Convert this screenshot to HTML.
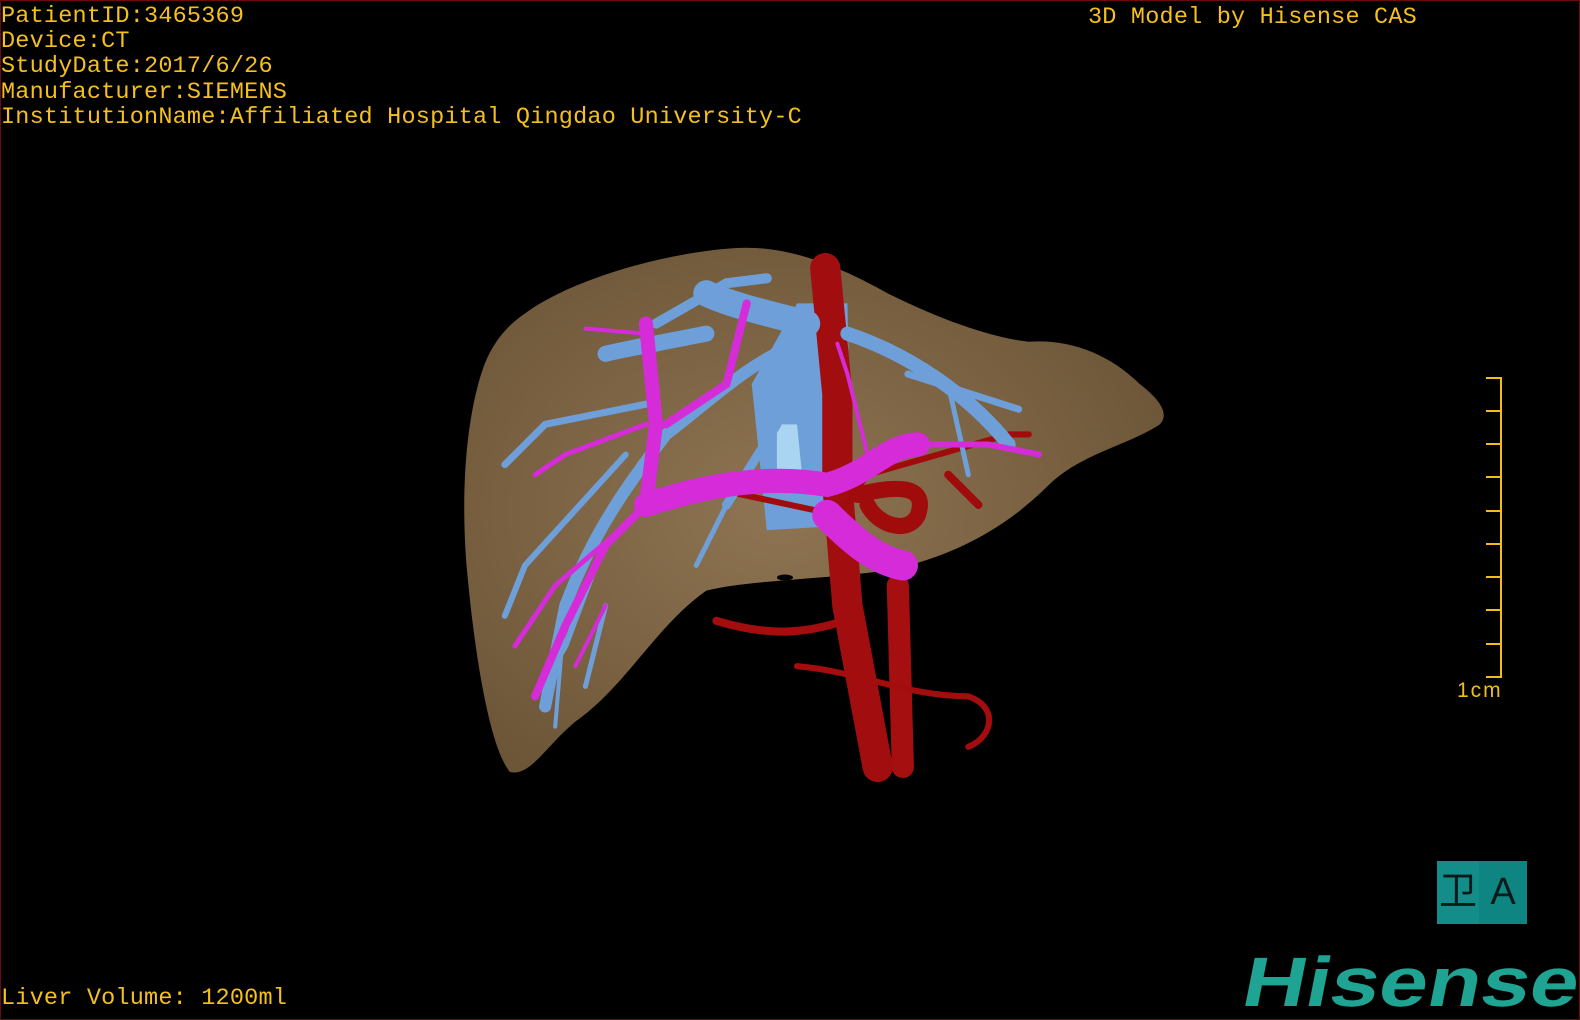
<!DOCTYPE html>
<html><head><meta charset="utf-8"><style>
html,body{margin:0;padding:0;background:#000;}
#w{position:relative;width:1580px;height:1020px;background:#000;overflow:hidden;box-sizing:border-box;border:1px solid #6a0c0c;}
.t{position:absolute;font-family:"Liberation Mono",monospace;font-size:23.5px;letter-spacing:0.2px;color:#f5c01e;white-space:pre;line-height:25.2px;}
#ruler{position:absolute;left:1499px;top:376px;width:2px;height:300px;background:#f2bd1c;}
.tk{position:absolute;left:1485px;width:16px;height:2px;background:#f2bd1c;}
#box{position:absolute;left:1436px;top:860px;width:90px;height:63px;background:#128d8a;}
#box div{position:absolute;top:0;height:63px;font-family:"Liberation Sans","Noto Sans CJK SC",sans-serif;color:#0a1a1a;font-size:38px;line-height:63px;text-align:center;}
#logo{position:absolute;left:1250px;top:946px;font-family:"Liberation Sans",sans-serif;font-weight:bold;font-size:70px;color:#1fa392;line-height:1;transform-origin:0 0;transform:scaleX(1.25) skewX(-9deg);}
</style></head><body><div id="w">
<svg style="position:absolute;left:0;top:0" width="1580" height="1020" viewBox="0 0 1568 1012">
<defs><radialGradient id="lg" cx="0.45" cy="0.5" r="0.6"><stop offset="0" stop-color="#8e7452"/><stop offset="1" stop-color="#6d5638"/></radialGradient></defs>
<path d="M520,310 C560,280 650,250 730,245 C780,242 830,262 880,290 C940,320 990,335 1020,338 C1060,335 1100,350 1130,380 C1150,395 1160,410 1150,420 C1120,440 1070,450 1040,480 C1000,520 950,550 880,565 C800,575 740,575 700,585 C650,620 620,680 570,715 C540,740 525,770 505,765 C485,740 470,650 462,560 C455,470 465,400 480,360 C490,335 505,320 520,310 Z" fill="url(#lg)"/>
<ellipse cx="778" cy="572" rx="8" ry="3" fill="#000"/>
<g fill="none" stroke-linecap="round">
<path d="M790,300 L840,300 L845,520 L760,525 L745,380 Z" fill="#6f9fd9" stroke="none"/>
<path d="M770,420 L790,420 L795,470 L770,470 Z" fill="#a9d4f2" stroke="none"/>
<path d="M818,265 L830,390 L830,480 L840,600 L870,760" stroke="#a20e10" stroke-width="30"/>
<path d="M890,580 L895,760" stroke="#a50f10" stroke-width="22"/>
<path d="M710,615 C760,630 800,630 850,610" stroke="#a30d0e" stroke-width="8"/>
<path d="M790,660 C850,665 900,690 960,690 C990,700 985,730 960,740" stroke="#a30d0e" stroke-width="6"/>
<path d="M850,490 C890,480 920,480 910,510 C900,530 870,520 860,500" stroke="#a00c0c" stroke-width="16"/>
<path d="M860,470 L1000,430 L1020,430" stroke="#a00c0c" stroke-width="6"/>
<path d="M940,470 L970,500" stroke="#a00c0c" stroke-width="8"/>
<path d="M690,480 L830,510 L860,470" stroke="#a00c0c" stroke-width="6"/>
<g stroke="#6f9fd9">
<path d="M800,320 C760,310 720,300 700,290" stroke-width="26"/>
<path d="M790,340 C740,360 700,400 660,430 C630,470 590,520 560,600 L540,700" stroke-width="12"/>
<path d="M700,330 C650,340 620,345 600,350" stroke-width="16"/>
<path d="M640,400 L540,420 L500,460" stroke-width="7"/>
<path d="M620,450 L520,560 L500,610" stroke-width="6"/>
<path d="M800,340 L770,420 L720,500" stroke-width="9"/>
<path d="M720,500 L690,560" stroke-width="5"/>
<path d="M840,330 C900,350 960,390 1000,440" stroke-width="14"/>
<path d="M900,370 L1010,405" stroke-width="7"/>
<path d="M590,560 L560,640 L530,690" stroke-width="6"/>
<path d="M650,320 L720,280 L760,275" stroke-width="10"/>
<path d="M600,600 L580,680" stroke-width="5"/>
<path d="M560,600 L550,720" stroke-width="4"/>
<path d="M940,380 L960,470" stroke-width="5"/>
</g>
<g stroke="#d52bd8">
<path d="M640,500 C700,480 760,470 820,480 C860,470 880,440 910,440" stroke-width="24"/>
<path d="M820,510 C850,540 870,555 895,560" stroke-width="30"/>
<path d="M640,500 L650,420 L640,320" stroke-width="14"/>
<path d="M660,420 L720,380 L740,300" stroke-width="8"/>
<path d="M640,500 L600,540 L560,620 L530,690" stroke-width="8"/>
<path d="M620,520 L550,580 L510,640" stroke-width="5"/>
<path d="M640,420 L560,450 L530,470" stroke-width="5"/>
<path d="M910,440 L980,440 L1030,450" stroke-width="6"/>
<path d="M860,450 L840,370 L830,340" stroke-width="4"/>
<path d="M580,325 L640,330" stroke-width="4"/>
<path d="M600,600 L570,660" stroke-width="4"/>
</g>
</g>
</svg>
<div class="t" style="left:0;top:3px">PatientID:3465369
Device:CT
StudyDate:2017/6/26
Manufacturer:SIEMENS
InstitutionName:Affiliated Hospital Qingdao University-C</div>
<div class="t" style="left:1087px;top:4px">3D Model by Hisense CAS</div>
<div class="t" style="left:0;top:985px">Liver Volume: 1200ml</div>
<div id="ruler"></div>
<div class="tk" style="top:376px"></div><div class="tk" style="top:409px"></div><div class="tk" style="top:442px"></div><div class="tk" style="top:475px"></div><div class="tk" style="top:509px"></div><div class="tk" style="top:542px"></div><div class="tk" style="top:575px"></div><div class="tk" style="top:608px"></div><div class="tk" style="top:642px"></div><div class="tk" style="top:675px"></div>
<div style="position:absolute;left:1456px;top:678px;font-family:'Liberation Sans',sans-serif;font-size:21px;color:#f2bd1c;letter-spacing:2px">1cm</div>
<div id="box"><div style="left:0;width:42px">卫</div><div style="left:42px;width:48px;background:#0f8582">A</div></div>
<div id="logo">Hisense</div>
</div></body></html>
